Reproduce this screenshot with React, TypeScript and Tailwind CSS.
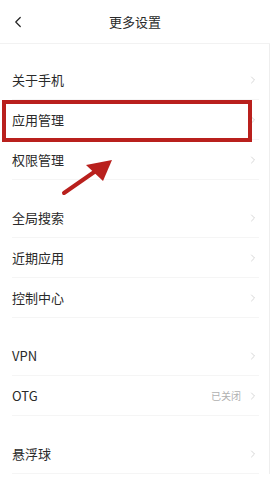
import { ChevronLeft, ChevronRight } from 'lucide-react'

type Row = { label: string; value?: string }

const groups: Row[][] = [
  [{ label: '关于手机' }, { label: '应用管理' }, { label: '权限管理' }],
  [{ label: '全局搜索' }, { label: '近期应用' }, { label: '控制中心' }],
  [{ label: 'VPN' }, { label: 'OTG', value: '已关闭' }],
  [{ label: '悬浮球' }],
]

export default function App() {
  return (
    <div
      className="relative h-[480px] w-[270px] overflow-hidden bg-white text-[#2a2a2a]"
      style={{ fontFamily: '"Noto Sans CJK SC", "Noto Sans", sans-serif' }}
    >
      <div className="relative flex h-[44px] items-center justify-center border-b border-[#f2f2f2]">
        <ChevronLeft className="absolute left-[9px] top-[13px] h-[18px] w-[18px] text-[#222]" strokeWidth={1.6} />
        <span className="text-[13px]">更多设置</span>
      </div>

      <div className="flex flex-col gap-[18px] border-r border-[#eeeeee] pt-[16px]">
        {groups.map((g, i) => (
          <div key={i} className="flex flex-col">
            {g.map((r) => (
              <div key={r.label} className="ml-3 mr-[10px] flex h-10 items-center border-b border-[#f5f5f5]">
                <span className="flex-1 text-[13px]">{r.label}</span>
                {r.value && <span className="mr-[6px] text-[10px] text-[#b0b0b0]">{r.value}</span>}
                <ChevronRight className="h-[12px] w-[12px] text-[#c8c8c8]" strokeWidth={1.5} />
              </div>
            ))}
          </div>
        ))}
      </div>

      {/* annotation: highlight box */}
      <div className="absolute left-[2px] top-[100px] h-[42px] w-[250px] border-4 border-[#b9201d]" />

      {/* annotation: arrow */}
      <svg className="absolute left-0 top-0" width="270" height="480" viewBox="0 0 270 480">
        <line x1="64" y1="193" x2="100" y2="168" stroke="#b9201d" strokeWidth="4" strokeLinecap="round" />
        <polygon points="112,160 86,165 103,181" fill="#b9201d" />
      </svg>
    </div>
  )
}
